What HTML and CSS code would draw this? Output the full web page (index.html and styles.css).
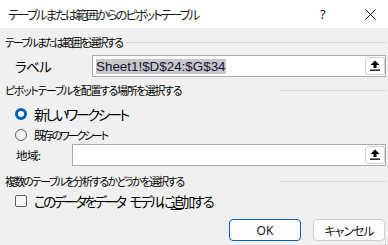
FILE: index.html
```html
<!DOCTYPE html>
<html lang="ja">
<head>
<meta charset="utf-8">
<link rel="stylesheet" href="styles.css">
</head>
<body>
<div class="dialog">
  <div class="titlebar">
    <span class="title">テーブルまたは範囲からのピボットテーブル</span>
    <span class="tb-help">?</span>
    <span class="tb-close"><svg width="11" height="11" viewBox="0 0 11 11"><path d="M0.5 0.5L10.5 10.5M10.5 0.5L0.5 10.5" stroke="#1a1a1a" stroke-width="1"/></svg></span>
  </div>
  <div class="content">
    <div class="section s1">
      <span class="sec-text t1">テーブルまたは範囲を選択する</span>
      <span class="sec-line grow"></span>
    </div>
    <div class="field-row label-row">
      <span class="field-label w-label">ラベル</span>
      <div class="input">
        <span class="sel">Sheet1!$D$24:$G$34</span>
        <span class="pick"><svg width="10" height="11" viewBox="0 0 10 11"><path d="M5 0.5L9.5 5H6.5V8H3.5V5H0.5Z" fill="#000"/><rect x="0" y="9.5" width="10" height="1.3" fill="#000"/></svg></span>
      </div>
    </div>
    <div class="section s2">
      <span class="sec-text t2">ピボットテーブルを配置する場所を選択する</span>
      <span class="sec-line fixed"></span>
    </div>
    <div class="radio-row r1">
      <span class="radio on"></span>
      <span class="opt-text big1">新しいワークシート</span>
    </div>
    <div class="radio-row r2">
      <span class="radio"></span>
      <span class="opt-text small">既存のワークシート</span>
    </div>
    <div class="field-row area-row">
      <span class="field-label w-area">地域:</span>
      <div class="input">
        <span class="pick"><svg width="10" height="11" viewBox="0 0 10 11"><path d="M5 0.5L9.5 5H6.5V8H3.5V5H0.5Z" fill="#000"/><rect x="0" y="9.5" width="10" height="1.3" fill="#000"/></svg></span>
      </div>
    </div>
    <div class="section s3">
      <span class="sec-text t3">複数のテーブルを分析するかどうかを選択する</span>
      <span class="sec-line fixed"></span>
    </div>
    <div class="check-row">
      <span class="checkbox"></span>
      <span class="opt-text big2">このデータをデータ<span class="sp"> </span>モデルに<u>追</u>加する</span>
    </div>
    <div class="buttons">
      <span class="btn primary">OK</span>
      <span class="btn">キャンセル</span>
    </div>
    <span class="grip"></span>
  </div>
</div>
</body>
</html>
```
FILE: styles.css
```css
html, body {
  margin: 0;
  padding: 0;
}
body {
  font-family: "Noto Sans CJK JP", sans-serif;
  font-feature-settings: "palt" 1;
  color: #000;
  width: 388px;
  height: 245px;
  overflow: hidden;
}
.dialog {
  width: 388px;
  height: 245px;
  background: #f0f0f0;
  display: flex;
  flex-direction: column;
}
.titlebar {
  height: 28px;
  background: #fff;
  display: flex;
  align-items: center;
  flex: none;
}
.title {
  margin-left: 8px;
  font-size: 12.5px;
  letter-spacing: -2px;
  color: #1a1a1a;
  white-space: nowrap;
}
.tb-help {
  margin-left: auto;
  font-family: "Noto Sans", sans-serif;
  font-size: 13px;
  color: #1a1a1a;
  width: 10px;
}
.tb-close {
  margin-left: 35px;
  margin-right: 12px;
  display: flex;
}
.content {
  position: relative;
  flex: 1;
  display: flex;
  flex-direction: column;
  padding: 0 2px 0 5px;
}
.section {
  display: flex;
  align-items: center;
  height: 12px;
  font-size: 10.8px;
  color: #000;
}
.s1 { margin-top: 8px; }
.s2 { margin-top: 7px; }
.s3 { margin-top: 9px; }
.sec-text { white-space: nowrap; line-height: 12px; }
.t1 { letter-spacing: -1.85px; }
.t2 { letter-spacing: -1.2px; }
.t3 { letter-spacing: -1.65px; }
.sec-line {
  height: 1px;
  background: #d8d8d8;
}
.sec-line.grow { flex: 1; margin-left: 4px; }
.sec-line.fixed { margin-left: auto; width: 106px; }
.field-row {
  display: flex;
  align-items: center;
  height: 22px;
}
.label-row { margin-top: 7px; }
.area-row { margin-top: 1px; }
.field-label {
  padding-left: 10px;
  box-sizing: border-box;
  white-space: nowrap;
}
.w-label { width: 87px; font-size: 13.5px; letter-spacing: -0.6px; }
.w-area { width: 67px; font-size: 11.5px; padding-left: 11px; letter-spacing: -0.6px; }
.input {
  flex: 1;
  height: 22px;
  box-sizing: border-box;
  background: #fff;
  border: 1px solid #a9a9a9;
  display: flex;
  align-items: center;
  padding-left: 3px;
}
.sel {
  background: #c8c8c8;
  color: #12133a;
  font-family: "Liberation Sans", sans-serif;
  font-size: 13.4px;
  line-height: 15px;
}
.pick {
  margin-left: auto;
  width: 20px;
  height: 18px;
  box-sizing: border-box;
  border: 1px solid #d0d0d0;
  border-radius: 3px;
  background: #fff;
  display: flex;
  align-items: center;
  justify-content: center;
  margin-bottom: 1px;
}
.radio-row, .check-row {
  display: flex;
  align-items: center;
}
.r1 { margin-top: 9px; height: 18px; }
.r2 { margin-top: 4px; height: 16px; }
.check-row { margin-top: 5px; height: 18px; }
.radio {
  width: 12px;
  height: 12px;
  box-sizing: border-box;
  border-radius: 50%;
  border: 1px solid #5f5f5f;
  background: #f4f4f4;
  margin-left: 10px;
  margin-right: 7px;
  flex: none;
}
.radio.on {
  border: 3.5px solid #005fb8;
  background: #fff;
}
.opt-text {
  white-space: nowrap;
}
.big1 { font-size: 14px; letter-spacing: -2.4px; }
.big2 { font-size: 13.6px; letter-spacing: -2.55px; }
.small { font-size: 11px; letter-spacing: -2.2px; }
.sp { letter-spacing: 0; margin-right: 2px; }
.opt-text u { text-underline-offset: 2px; }
.checkbox {
  width: 12px;
  height: 12px;
  box-sizing: border-box;
  border: 1px solid #5f5f5f;
  border-radius: 2px;
  background: #f6f6f6;
  margin-left: 10px;
  margin-right: 7px;
  flex: none;
}
.buttons {
  display: flex;
  justify-content: flex-end;
  gap: 12px;
  margin-top: 9px;
  padding-right: 1px;
}
.btn {
  width: 72px;
  height: 22px;
  box-sizing: border-box;
  border: 1px solid #cfcfcf;
  border-radius: 4px;
  background: #fdfdfd;
  display: flex;
  align-items: center;
  justify-content: center;
  font-size: 12px;
  letter-spacing: -1px;
  color: #1a1a1a;
}
.btn.primary {
  border: 1px solid #005fb8;
  font-family: "Noto Sans", sans-serif;
  letter-spacing: 0;
}
.grip {
  position: absolute;
  right: 0;
  bottom: 0;
  width: 4px;
  height: 8px;
  background-image: radial-gradient(circle, #b0b0b0 0.8px, transparent 1px);
  background-size: 3px 3px;
}
```
